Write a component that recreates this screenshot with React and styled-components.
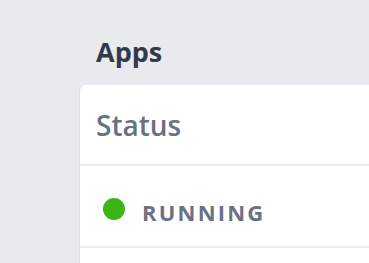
import React from 'react';
import styled, { createGlobalStyle } from 'styled-components';

const GlobalStyle = createGlobalStyle`
  html, body {
    margin: 0;
    padding: 0;
    background: #e9eaee;
    overflow: hidden;
  }
  body {
    font-family: "Open Sans", Lato, sans-serif;
  }
`;

const Page = styled.div`
  width: 369px;
  height: 263px;
  padding: 32px 0 0 80px;
  box-sizing: border-box;
  overflow: hidden;
`;

const Title = styled.h2`
  margin: 0 0 13px 16px;
  font-size: 27px;
  line-height: 40px;
  font-weight: 700;
  color: #343a4d;
`;

const Card = styled.div`
  width: 400px;
  height: 200px;
  background: #fff;
  border-radius: 6px 0 0 0;
  box-shadow: -1px 0 0 #dfe1e6;
`;

const HeaderCell = styled.div`
  height: 79px;
  display: flex;
  align-items: center;
  padding-left: 16px;
  font-size: 28px;
  font-weight: 600;
  color: #687084;
  border-bottom: 2px solid #ebecef;
`;

const Row = styled.div`
  height: 82px;
  display: flex;
  align-items: center;
  gap: 17px;
  padding-left: 23px;
  padding-top: 12px;
  box-sizing: border-box;
  border-bottom: 2px solid #ebecef;
`;

const Dot = styled.span`
  width: 22px;
  height: 22px;
  border-radius: 50%;
  background: ${p => p.color};
  flex: none;
  margin-top: -6px;
`;

const StatusText = styled.span`
  font-size: 22px;
  font-weight: 700;
  letter-spacing: 2.2px;
  color: #6a7184;
  text-transform: uppercase;
`;

export default function App() {
  return (
    <>
      <GlobalStyle />
      <Page>
        <Title>Apps</Title>
        <Card>
          <HeaderCell>Status</HeaderCell>
          <Row>
            <Dot color="#3db515" />
            <StatusText>Running</StatusText>
          </Row>
        </Card>
      </Page>
    </>
  );
}
